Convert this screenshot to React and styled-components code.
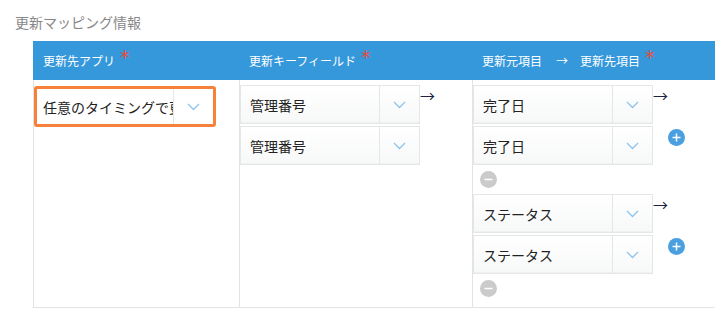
import styled, { createGlobalStyle } from "styled-components";

const GlobalStyle = createGlobalStyle`
  html, body {
    margin: 0;
    padding: 0;
    background: #fff;
    overflow: hidden;
  }
  body {
    font-family: "Noto Sans CJK JP", "Noto Sans", sans-serif;
  }
  * {
    box-sizing: border-box;
  }
`;

const Page = styled.div`
  width: 715px;
  height: 326px;
  padding: 12px 0 0 15px;
`;

const Title = styled.div`
  font-size: 14px;
  line-height: 20px;
  color: #888;
  height: 29px;
`;

const Table = styled.div`
  margin-left: 18px;
  width: 760px;
  border-bottom: 1px solid #e3e3e3;
`;

const HeaderRow = styled.div`
  display: grid;
  grid-template-columns: 206px 233px 321px;
  height: 39px;
  background: #3498db;
`;

const HeaderCell = styled.div`
  display: flex;
  align-items: center;
  padding-left: 10px;
  color: #fff;
  font-size: 12px;
  white-space: pre;
`;

const Required = styled.span`
  color: #e74c3c;
  font-family: "DejaVu Sans", sans-serif;
  font-size: 19px;
  line-height: 19px;
  margin-left: 5px;
  position: relative;
  top: -3px;
`;

const HeaderArrow = styled.span`
  font-size: 12px;
  margin: 0 12px 0 14px;
`;

const BodyRow = styled.div`
  display: grid;
  grid-template-columns: 206px 233px 321px;
`;

const Cell = styled.div`
  border-left: 1px solid #e3e3e3;
  padding: ${(p) => (p.$top ? p.$top : 5)}px 0 10px 0;
  display: flex;
  flex-direction: column;
  gap: 6px;
`;

const Select = styled.div`
  display: flex;
  width: ${(p) => (p.$active ? 182 : 180)}px;
  height: ${(p) => (p.$active ? 41 : 39)}px;
  border: ${(p) => (p.$active ? "3px solid #f5813b" : "1px solid #e3e7e8")};
  border-radius: ${(p) => (p.$active ? 3 : 0)}px;
  background: ${(p) => (p.$active ? "#fff" : "linear-gradient(#ffffff, #f7f8f8)")};
  box-shadow: ${(p) => (p.$active ? "none" : "inset 0 -1px 1px rgba(0,0,0,0.03)")};
`;

const SelectText = styled.div`
  flex: 1;
  min-width: 0;
  padding-left: ${(p) => (p.$active ? 6 : 9)}px;
  display: flex;
  align-items: center;
  font-size: 14px;
  color: #222;
  white-space: nowrap;
  overflow: hidden;
`;

const Toggle = styled.div`
  width: 40px;
  flex: none;
  border-left: 1px solid #e3e7e8;
  display: flex;
  align-items: center;
  justify-content: center;
`;

const Stack = styled.div`
  display: flex;
  flex-direction: column;
  gap: 2px;
`;

const Group = styled.div`
  display: flex;
  align-items: flex-start;
`;

const GroupMain = styled.div`
  display: flex;
  flex-direction: column;
  gap: 6px;
`;

const Side = styled.div`
  display: flex;
  flex-direction: column;
  align-items: flex-start;
`;

const Arrow = styled.span`
  font-size: 15px;
  line-height: 16px;
  color: #1d2240;
  margin-top: 3px;
  padding-left: 0;
`;

const Round = styled.div`
  width: 17px;
  height: 17px;
  border-radius: 50%;
  background: ${(p) => (p.$add ? "#4a9fe0" : "#cbcbcb")};
  display: flex;
  align-items: center;
  justify-content: center;
  margin-left: ${(p) => (p.$add ? 15 : 7)}px;
  margin-top: ${(p) => (p.$add ? 25 : 0)}px;
`;

function Chevron() {
  return (
    <svg width="13" height="8" viewBox="0 0 13 8">
      <polyline
        points="1,1 6.5,6.5 12,1"
        fill="none"
        stroke="#8cc4ee"
        strokeWidth="1.3"
      />
    </svg>
  );
}

function Dropdown({ label, active }) {
  return (
    <Select $active={active}>
      <SelectText $active={active}>{label}</SelectText>
      <Toggle>
        <Chevron />
      </Toggle>
    </Select>
  );
}

function RoundButton({ add }) {
  return (
    <Round $add={add}>
      <svg width="9" height="9" viewBox="0 0 9 9">
        <line x1="0.5" y1="4.5" x2="8.5" y2="4.5" stroke="#fff" strokeWidth="1.5" />
        {add && <line x1="4.5" y1="0.5" x2="4.5" y2="8.5" stroke="#fff" strokeWidth="1.5" />}
      </svg>
    </Round>
  );
}

function FieldGroup({ label }) {
  return (
    <Group>
      <GroupMain>
        <Stack>
          <Dropdown label={label} />
          <Dropdown label={label} />
        </Stack>
        <RoundButton />
      </GroupMain>
      <Side>
        <Arrow>→</Arrow>
        <RoundButton add />
      </Side>
    </Group>
  );
}

export default function App() {
  return (
    <>
      <GlobalStyle />
      <Page>
        <Title>更新マッピング情報</Title>
        <Table>
          <HeaderRow>
            <HeaderCell>
              更新先アプリ<Required>*</Required>
            </HeaderCell>
            <HeaderCell>
              更新キーフィールド<Required>*</Required>
            </HeaderCell>
            <HeaderCell>
              更新元項目<HeaderArrow>→</HeaderArrow>更新先項目<Required>*</Required>
            </HeaderCell>
          </HeaderRow>
          <BodyRow>
            <Cell $top={6}>
              <Dropdown label="任意のタイミングで更新" active />
            </Cell>
            <Cell>
              <Group>
                <Stack>
                  <Dropdown label="管理番号" />
                  <Dropdown label="管理番号" />
                </Stack>
                <Arrow>→</Arrow>
              </Group>
            </Cell>
            <Cell>
              <FieldGroup label="完了日" />
              <FieldGroup label="ステータス" />
            </Cell>
          </BodyRow>
        </Table>
      </Page>
    </>
  );
}
